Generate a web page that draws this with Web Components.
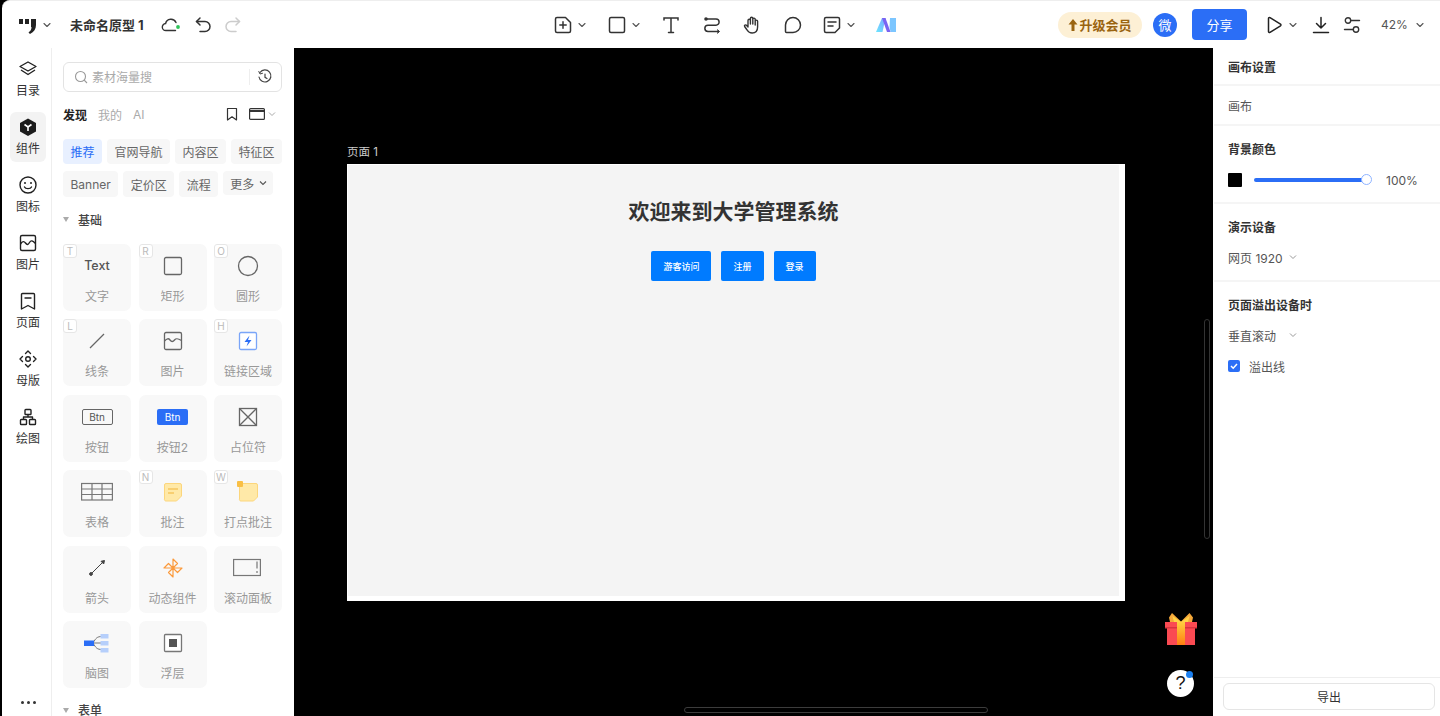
<!DOCTYPE html>
<html lang="zh">
<head>
<meta charset="utf-8">
<title>未命名原型 1</title>
<style>
  html, body { margin: 0; height: 100%; background: #000; overflow: hidden; }
  body { font-family: Inter, "Noto Sans CJK SC", sans-serif; }
  svg { display: block; }
</style>
</head>
<body>
<proto-app>
  <top-bar slot="top">
    <tool-btn style="margin-left:16px"><svg width="20" height="20" viewBox="0 0 20 20" fill="#222"><rect x="1" y="4" width="4" height="5"/><rect x="7" y="4" width="4" height="5"/><path d="M13 4h5v6c0 4-2 7-6 9l-1.500-1.500c2-1.500 3-3 3-5.500h-.5z"/></svg></tool-btn>
    <chev-down style="margin-left:4px"></chev-down>
    <span style="margin-left:18px;width:74px;font-size:13px;font-weight:700;color:#333;white-space:nowrap">未命名原型 1</span>
    <tool-btn style="margin-left:17px"><svg width="20" height="20" viewBox="0 0 20 20" fill="none" stroke="#333" stroke-width="1.400" stroke-linecap="round"><path d="M14.500 15.500H5a3.500 3.500 0 0 1-.4-7A5.500 5.500 0 0 1 15 7.500"/><circle cx="17" cy="12" r="1.900" fill="#2ec45a" stroke="none"/></svg></tool-btn>
    <tool-btn style="margin-left:12px"><svg width="20" height="20" viewBox="0 0 20 20" fill="none" stroke="#333" stroke-width="1.500" stroke-linecap="round" stroke-linejoin="round"><path d="M7 3 3.500 6.500 7 10"/><path d="M3.500 6.500h8.500a5 5 0 0 1 0 10H7"/></svg></tool-btn>
    <tool-btn style="margin-left:10px"><svg width="20" height="20" viewBox="0 0 20 20" fill="none" stroke="#ccc" stroke-width="1.500" stroke-linecap="round" stroke-linejoin="round"><path d="M13 3l3.500 3.500L13 10"/><path d="M16.500 6.500H8a5 5 0 0 0 0 10h5"/></svg></tool-btn>

    <tool-btn style="margin-left:310px"><svg width="20" height="20" viewBox="0 0 20 20" fill="none" stroke="#333" stroke-width="1.500" stroke-linecap="round" stroke-linejoin="round"><path d="M4 2.500h8.500l5 5V16a1.500 1.500 0 0 1-1.500 1.500H4A1.500 1.500 0 0 1 2.500 16V4A1.500 1.500 0 0 1 4 2.500z"/><path d="M10 6.800v6.400M6.800 10h6.400"/></svg></tool-btn>
    <chev-down style="margin-left:4px"></chev-down>
    <tool-btn style="margin-left:20px"><svg width="20" height="20" viewBox="0 0 20 20" fill="none" stroke="#333" stroke-width="1.500"><rect x="2.500" y="2.500" width="15" height="15" rx="1.500"/></svg></tool-btn>
    <chev-down style="margin-left:4px"></chev-down>
    <tool-btn style="margin-left:20px"><svg width="20" height="20" viewBox="0 0 20 20" fill="none" stroke="#333" stroke-width="1.500" stroke-linecap="round"><path d="M3 5V3h14v2M10 3v14.500M7.500 17.500h5"/></svg></tool-btn>
    <tool-btn style="margin-left:21px"><svg width="20" height="20" viewBox="0 0 20 20" fill="none" stroke="#333" stroke-width="1.500" stroke-linecap="round"><path d="M4 4h10a3 3 0 0 1 0 6.200H6a3 3 0 0 0 0 6.300h10"/><circle cx="4" cy="4" r="1.800" fill="#333" stroke="none"/><path d="M15.500 14.800l2 1.700-2 1.700" fill="#333" stroke-width="1"/></svg></tool-btn>
    <tool-btn style="margin-left:20px"><svg width="20" height="20" viewBox="0 0 20 20" fill="none" stroke="#333" stroke-width="1.400" stroke-linecap="round" stroke-linejoin="round"><path d="M6 12V5.500a1.200 1.200 0 0 1 2.400 0V9M8.400 9V3.500a1.200 1.200 0 0 1 2.400 0V9M10.800 9V4.300a1.200 1.200 0 0 1 2.400 0V10M13.200 10V6.300a1.200 1.200 0 0 1 2.400 0V12c0 3.500-2 6-5.500 6-2.500 0-3.800-1-5-3L2.600 11.500c-.6-1 .9-2.200 1.900-1.200L6 12"/></svg></tool-btn>
    <tool-btn style="margin-left:21px"><svg width="20" height="20" viewBox="0 0 20 20" fill="none" stroke="#333" stroke-width="1.500" stroke-linejoin="round"><path d="M10 2.500a7.500 7.500 0 1 1 0 15H3.500a1 1 0 0 1-1-1V10A7.500 7.500 0 0 1 10 2.500z"/></svg></tool-btn>
    <tool-btn style="margin-left:19px"><svg width="20" height="20" viewBox="0 0 20 20" fill="none" stroke="#333" stroke-width="1.500" stroke-linecap="round" stroke-linejoin="round"><path d="M4 2.500h12A1.500 1.500 0 0 1 17.500 4v9L13 17.500H4A1.500 1.500 0 0 1 2.500 16V4A1.500 1.500 0 0 1 4 2.500z"/><path d="M6 7h8M6 11h5"/></svg></tool-btn>
    <chev-down style="margin-left:4px"></chev-down>
    <tool-btn style="margin-left:20px"><svg width="20" height="20" viewBox="0 0 20 20"><defs><linearGradient id="mg" x1="0" y1="1" x2="1" y2="0"><stop offset="0" stop-color="#6be6ff"/><stop offset="1" stop-color="#7fa6ff"/></linearGradient></defs><path d="M0 17 6 3h3.500l-3 14z" fill="url(#mg)"/><path d="M14 3H20v14h-5.500l-1-5z" fill="#7cc6ff"/><path d="M6 3h3.500l5 14H11z" fill="#7a63f2"/></svg></tool-btn>

    <span style="margin-left:162px;width:84px;height:26px;border-radius:13px;background:#fdf0d5;color:#9a6410;font-size:13px;font-weight:700;display:flex;align-items:center;justify-content:center;gap:1px"><svg width="10" height="14" viewBox="0 0 10 14" fill="#9a6410"><path d="M5 1 9.500 6.500H6.500V13h-3V6.500H.5z"/></svg>升级会员</span>
    <span style="margin-left:11px;width:24px;height:24px;border-radius:50%;background:#2b6ef6;color:#fff;font-size:13px;display:flex;align-items:center;justify-content:center">微</span>
    <span style="margin-left:15px;width:55px;height:31px;border-radius:4px;background:#2b6ef6;color:#fff;font-size:13px;display:flex;align-items:center;justify-content:center">分享</span>
    <tool-btn style="margin-left:17px"><svg width="20" height="20" viewBox="0 0 20 20" fill="none" stroke="#222" stroke-width="1.500" stroke-linejoin="round"><path d="M4.500 3.500c0-.8.800-1.200 1.500-.8l10.500 6.500c.6.400.6 1.200 0 1.600L6 17.300c-.7.400-1.500 0-1.500-.8z"/></svg></tool-btn>
    <chev-down style="margin-left:4px"></chev-down>
    <tool-btn style="margin-left:13px"><svg width="20" height="20" viewBox="0 0 20 20" fill="none" stroke="#222" stroke-width="1.500" stroke-linecap="round" stroke-linejoin="round"><path d="M10 2.500V13M5.500 8.500 10 13l4.500-4.500M2.500 17.500h15"/></svg></tool-btn>
    <tool-btn style="margin-left:11px"><svg width="20" height="20" viewBox="0 0 20 20" fill="none" stroke="#333" stroke-width="1.400" stroke-linecap="round"><circle cx="6" cy="5.500" r="2.700"/><path d="M9 5.500h8.500M2.500 14.500h8.500"/><circle cx="14" cy="14.500" r="2.700"/></svg></tool-btn>
    <span style="margin-left:19px;width:27px;font-size:12px;color:#555;white-space:nowrap">42%</span>
    <chev-down style="margin-left:7px"></chev-down>
  </top-bar>

  <side-rail slot="rail">
    <rail-item label="目录"><svg width="20" height="20" viewBox="0 0 20 20" fill="none" stroke="#222" stroke-width="1.400" stroke-linejoin="round"><path d="M10 3l8 4.500-8 4.500-8-4.500z"/><path d="M3 11l7 4.500 7-4.500"/></svg></rail-item>
    <rail-item label="组件" active><svg width="20" height="20" viewBox="0 0 20 20"><path d="M10 1.500 18 6v8.500L10 19l-8-4.500V6z" fill="#1c1c1c"/><path d="M6.500 7.500 10 10l3.500-2.500M10 10v4" fill="none" stroke="#fff" stroke-width="1.600"/></svg></rail-item>
    <rail-item label="图标"><svg width="20" height="20" viewBox="0 0 20 20" fill="none" stroke="#222" stroke-width="1.400" stroke-linecap="round"><circle cx="10" cy="10" r="8"/><circle cx="7" cy="8" r="1" fill="#222" stroke="none"/><circle cx="13" cy="8" r="1" fill="#222" stroke="none"/><path d="M6.500 12c1 2.200 6 2.200 7 0"/></svg></rail-item>
    <rail-item label="图片"><svg width="20" height="20" viewBox="0 0 20 20" fill="none" stroke="#222" stroke-width="1.400" stroke-linejoin="round"><rect x="2.500" y="2.500" width="15" height="15" rx="1.500"/><path d="M2.500 11c2-3 3.500-3 5-1s2.500 2 4-.5 3-2 6 1"/></svg></rail-item>
    <rail-item label="页面"><svg width="20" height="20" viewBox="0 0 20 20" fill="none" stroke="#222" stroke-width="1.400" stroke-linecap="round" stroke-linejoin="round"><path d="M3.500 18V3.500a1 1 0 0 1 1-1h11a1 1 0 0 1 1 1V18L10 14.500z"/><path d="M7 7h6"/></svg></rail-item>
    <rail-item label="母版"><svg width="20" height="20" viewBox="0 0 20 20" fill="none" stroke="#222" stroke-width="1.400" stroke-linecap="round" stroke-linejoin="round"><circle cx="10" cy="10" r="2.300"/><path d="M7.500 4.500 10 2l2.500 2.500M7.500 15.500 10 18l2.500-2.500M4.500 7.500 2 10l2.500 2.500M15.500 7.500 18 10l-2.500 2.500"/></svg></rail-item>
    <rail-item label="绘图"><svg width="20" height="20" viewBox="0 0 20 20" fill="none" stroke="#222" stroke-width="1.400" stroke-linejoin="round"><rect x="7" y="2.500" width="6" height="5" rx=".8"/><rect x="2.500" y="12.500" width="6" height="5" rx=".8"/><rect x="11.500" y="12.500" width="6" height="5" rx=".8"/><path d="M10 7.500v2.500M5.500 12.500V10h9v2.500"/></svg></rail-item>
  </side-rail>

  <asset-panel slot="panel">
    <asset-card label="文字" key="T"><span style="font-size:12.500px;font-weight:500;color:#555;line-height:24px">Text</span></asset-card>
    <asset-card label="矩形" key="R"><svg width="24" height="24" viewBox="0 0 24 24" fill="none" stroke="#666" stroke-width="1.300"><rect x="3.500" y="3.500" width="17" height="17" rx="1.500"/></svg></asset-card>
    <asset-card label="圆形" key="O"><svg width="24" height="24" viewBox="0 0 24 24" fill="none" stroke="#666" stroke-width="1.300"><circle cx="12" cy="12" r="9.500"/></svg></asset-card>
    <asset-card label="线条" key="L"><svg width="24" height="24" viewBox="0 0 24 24" fill="none" stroke="#666" stroke-width="1.200"><path d="M5 19 19 5"/></svg></asset-card>
    <asset-card label="图片"><svg width="24" height="24" viewBox="0 0 24 24" fill="none" stroke="#666" stroke-width="1.300" stroke-linejoin="round"><rect x="3.500" y="3.500" width="17" height="17" rx="1.500"/><path d="M3.500 12c2.500-2.500 4-3 5.500-1s3 2 4.500 0 3-2 7 .5"/></svg></asset-card>
    <asset-card label="链接区域" key="H"><svg width="24" height="24" viewBox="0 0 24 24"><rect x="3.500" y="3.500" width="17" height="17" rx="1.500" fill="#fff" stroke="#7aa5f8" stroke-width="1.300"/><path d="M13.500 6.500 8.500 13H12l-1.500 4.500 5-6.500H12z" fill="#2b6ef6"/></svg></asset-card>
    <asset-card label="按钮"><span style="width:31px;height:16px;border:1.300px solid #666;border-radius:2px;font-size:10px;color:#555;display:flex;align-items:center;justify-content:center;margin-top:4px;box-sizing:border-box">Btn</span></asset-card>
    <asset-card label="按钮2"><span style="width:31px;height:16px;background:#2b6ef6;border-radius:2px;font-size:10px;color:#fff;display:flex;align-items:center;justify-content:center;margin-top:4px">Btn</span></asset-card>
    <asset-card label="占位符"><svg width="24" height="24" viewBox="0 0 24 24" fill="none" stroke="#666" stroke-width="1.300"><rect x="3.500" y="3.500" width="17" height="17"/><path d="M3.500 3.500l17 17M20.500 3.500l-17 17"/></svg></asset-card>
    <asset-card label="表格"><svg width="32" height="24" viewBox="0 0 32 24" fill="none" stroke="#777" stroke-width="1.200"><rect x=".6" y="3.500" width="30.800" height="16.500"/><path d="M.6 9h30.800M.6 14.500h30.800M11 3.500V20M21 3.500V20"/></svg></asset-card>
    <asset-card label="批注" key="N"><svg width="24" height="24" viewBox="0 0 24 24"><path d="M5 3.500h14a1.500 1.500 0 0 1 1.500 1.500v11l-5 5H5A1.500 1.500 0 0 1 3.500 19V5A1.500 1.500 0 0 1 5 3.500z" fill="#ffe9a8" stroke="#fcd67c"/><path d="M7 9h10M7 13h6" stroke="#f6c65f" stroke-width="1.300"/></svg></asset-card>
    <asset-card label="打点批注" key="W"><svg width="24" height="24" viewBox="0 0 24 24"><path d="M5 3.500h15a1.500 1.500 0 0 1 1.500 1.500v12l-4 4H5A1.500 1.500 0 0 1 3.500 19V5A1.500 1.500 0 0 1 5 3.500z" fill="#ffe9a8" stroke="#fcd67c"/><rect x="1" y="1" width="6" height="6" rx="1" fill="#f9bf45"/></svg></asset-card>
    <asset-card label="箭头"><svg width="24" height="24" viewBox="0 0 24 24" fill="#444" stroke="#444" stroke-width="1"><path d="M6 18 18 6"/><circle cx="6" cy="18" r="1.400"/><path d="M19.500 4.500l-.8 3.500-2.700-2.700z"/></svg></asset-card>
    <asset-card label="动态组件"><svg width="24" height="24" viewBox="0 0 24 24" fill="none" stroke="#fb9a3c" stroke-width="1.200" stroke-linejoin="round"><path d="M12 12V3L16.500 7.500zM12 12h9l-4.500 4.500zM12 12v9l-4.500-4.500zM12 12H3l4.500-4.500z"/></svg></asset-card>
    <asset-card label="滚动面板"><svg width="30" height="24" viewBox="0 0 30 24" fill="none" stroke="#777" stroke-width="1.200"><rect x=".6" y="3.500" width="26.800" height="16"/><path d="M24 5.500v7M24 15v2" stroke-width="1.200"/></svg></asset-card>
    <asset-card label="脑图"><svg width="26" height="24" viewBox="0 0 26 24" fill="none"><path d="M9 12c3-5 4-6.500 9-6.500M9 12h9M9 12c3 5 4 6.500 9 6.500" stroke="#777" stroke-width="1"/><rect x="0" y="9.500" width="10" height="5.500" fill="#2b6ef6"/><rect x="16.500" y="3" width="8" height="4.500" fill="#b6cffb"/><rect x="16.500" y="10" width="8" height="4.500" fill="#b6cffb"/><rect x="16.500" y="17" width="8" height="4.500" fill="#b6cffb"/></svg></asset-card>
    <asset-card label="浮层"><svg width="24" height="24" viewBox="0 0 24 24"><rect x="3.500" y="3.500" width="17" height="17" rx="1" fill="#fff" stroke="#777" stroke-width="1.300"/><rect x="8" y="8" width="8" height="8" fill="#555"/></svg></asset-card>
  </asset-panel>

  <canvas-stage slot="stage">
    <art-board>
      <h-title>欢迎来到大学管理系统</h-title>
      <blue-btn>游客访问</blue-btn>
      <blue-btn>注册</blue-btn>
      <blue-btn>登录</blue-btn>
    </art-board>
  </canvas-stage>

  <props-panel slot="props"></props-panel>
</proto-app>

<script>
// small helper so each element only has to say what its shadow holds
function shadow(el, html) {
  el.attachShadow({ mode: 'open' }).innerHTML = html;
}

class ProtoApp extends HTMLElement {
  constructor() {
    super();
    shadow(this, `
      <style>
        :host { display: flex; flex-direction: column; width: 1438px; height: 716px; margin-left: 2px; background: #fff; border-top: 1px solid #eee; box-sizing: border-box; border-top-left-radius: 8px; overflow: hidden; color: #333; }
        .main { flex: 1; display: flex; min-height: 0; }
      </style>
      <slot name="top"></slot>
      <div class="main">
        <slot name="rail"></slot>
        <slot name="panel"></slot>
        <slot name="stage"></slot>
        <slot name="props"></slot>
      </div>`);
  }
}

class TopBar extends HTMLElement {
  constructor() {
    super();
    shadow(this, `
      <style>
        :host { display: flex; align-items: center; height: 47px; flex: none; }
      </style>
      <slot></slot>`);
  }
}

class ToolBtn extends HTMLElement {
  constructor() {
    super();
    shadow(this, `
      <style>:host { display: block; width: 20px; height: 20px; flex: none; }</style>
      <slot></slot>`);
  }
}

class ChevDown extends HTMLElement {
  constructor() {
    super();
    shadow(this, `
      <style>:host { display: block; width: 10px; height: 10px; flex: none; } svg { display: block; }</style>
      <svg width="10" height="10" viewBox="0 0 10 10" fill="none" stroke="#555" stroke-width="1.100" stroke-linecap="round" stroke-linejoin="round"><path d="M2 3.500 5 6.500 8 3.500"/></svg>`);
  }
}

class SideRail extends HTMLElement {
  constructor() {
    super();
    shadow(this, `
      <style>
        :host { display: flex; flex-direction: column; align-items: center; width: 50px; flex: none; padding: 6px 0 0 3px; gap: 8px; box-sizing: border-box; border-right: 1px solid #eee; }
        .more { margin-top: auto; margin-bottom: 12px; display: flex; gap: 3px; }
        .more i { width: 3px; height: 3px; border-radius: 50%; background: #333; }
      </style>
      <slot></slot>
      <div class="more"><i></i><i></i><i></i></div>`);
  }
}

class RailItem extends HTMLElement {
  constructor() {
    super();
    const on = this.hasAttribute('active');
    shadow(this, `
      <style>
        :host { display: flex; flex-direction: column; align-items: center; width: 36px; height: 50px; padding-top: 5px; box-sizing: border-box; border-radius: 6px; background: ${on ? '#f3f3f3' : 'transparent'}; }
        span { font-size: 12px; line-height: 16px; margin-top: 4px; color: #333; }
      </style>
      <slot></slot>
      <span>${this.getAttribute('label')}</span>`);
  }
}

class AssetPanel extends HTMLElement {
  constructor() {
    super();
    const chips = (list) => list.map((c) => `<span class="chip ${c === '推荐' ? 'on' : ''}">${c}</span>`).join('');
    shadow(this, `
      <style>
        :host { display: block; width: 242px; flex: none; box-sizing: border-box; padding: 14px 12px 0 11px; overflow: hidden; }
        .search { display: flex; align-items: center; height: 30px; box-sizing: border-box; border: 1px solid #e3e3e3; border-radius: 6px; padding: 0 8px 2px 10px; font-size: 12px; color: #aaa; }
        .search svg { margin-top: 2px; }
        .search svg:first-child { margin-right: 4px; }
        .search .sep { margin-left: auto; width: 1px; height: 16px; background: #eee; margin-right: 7px; margin-top: 2px; }
        .tabs { display: flex; align-items: center; height: 20px; margin-top: 12px; font-size: 12px; color: #aaa; gap: 11px; }
        .tabs b { color: #222; }
        .tabs svg { display: block; }
        .tabs .r { margin-left: auto; display: flex; align-items: center; }
        .chips { display: flex; gap: 5px; height: 25px; font-size: 12px; color: #666; }
        .chips.one { margin-top: 15px; }
        .chips.two { margin-top: 7px; height: 26px; }
        .chip { background: #f7f7f7; border-radius: 4px; padding: 0 7.500px; display: flex; align-items: center; white-space: nowrap; }
        .chip.on { background: #e8f0ff; color: #2b6ef6; }
        .chip.more { height: 24px; gap: 4px; padding: 0 5px 0 7px; }
        .head { display: flex; align-items: center; height: 20px; font-size: 12px; font-weight: 500; color: #444; }
        .head i { width: 0; height: 0; border: 3.500px solid transparent; border-top: 5px solid #aaa; border-bottom: 0; margin: 1px 9px 0 0; }
        .head.basic { margin-top: 12px; }
        .grid { display: grid; grid-template-columns: repeat(3, 68px); grid-auto-rows: 67px; column-gap: 7.500px; row-gap: 8.400px; margin-top: 15px; }
        .head.form { margin-top: 12px; }
      </style>
      <div class="search">
        <svg width="14" height="14" viewBox="0 0 14 14" fill="none" stroke="#999" stroke-width="1.100"><circle cx="6.500" cy="6.500" r="5"/><path d="M10.200 10.200 13 13"/></svg>
        <span>素材海量搜</span><span class="sep"></span>
        <svg width="16" height="16" viewBox="0 0 16 16" fill="none" stroke="#444" stroke-width="1.200" stroke-linecap="round"><path d="M3 3.500A6 6 0 1 1 2 8"/><path d="M1.800 2.500 3 5l2.500-.7" stroke-width="1"/><path d="M8 5v3.300l2 1.200"/></svg>
      </div>
      <div class="tabs">
        <b>发现</b><span>我的</span><span>AI</span>
        <span class="r">
          <svg width="12" height="14" viewBox="0 0 12 14" fill="none" stroke="#333" stroke-width="1.200" stroke-linejoin="round"><path d="M1.500 13V1.500h9V13L6 9.800z"/></svg>
          <svg style="margin-left:11px" width="16" height="12" viewBox="0 0 16 12" fill="none" stroke="#333" stroke-width="1.200"><rect x=".6" y=".6" width="14.800" height="10.800" rx="1"/><path d="M.6 3h14.800" stroke-width="1.800"/></svg>
          <svg style="margin-left:2px;margin-right:5px" width="10" height="10" viewBox="0 0 10 10" fill="none" stroke="#aaa" stroke-width="1"><path d="M2 3.500 5 6.500 8 3.500"/></svg>
        </span>
      </div>
      <div class="chips one">${chips(['推荐', '官网导航', '内容区', '特征区'])}</div>
      <div class="chips two">${chips(['Banner', '定价区', '流程'])}<span class="chip more">更多<svg width="10" height="10" viewBox="0 0 10 10" fill="none" stroke="#555" stroke-width="1.100"><path d="M2 3.500 5 6.500 8 3.500"/></svg></span></div>
      <div class="head basic"><i></i>基础</div>
      <div class="grid"><slot></slot></div>
      <div class="head form"><i></i>表单</div>`);
  }
}

class AssetCard extends HTMLElement {
  constructor() {
    super();
    const key = this.getAttribute('key');
    shadow(this, `
      <style>
        :host { display: flex; flex-direction: column; align-items: center; position: relative; box-sizing: border-box; padding-top: 10px; background: #f8f8f8; border-radius: 7px; }
        .icon { height: 24px; display: flex; align-items: flex-start; justify-content: center; }
        .name { margin-top: 11px; font-size: 12px; line-height: 16px; color: #999; white-space: nowrap; }
        .key { position: absolute; left: 0; top: 0; width: 12px; height: 12px; border: 1px solid #e6e6e6; border-radius: 3px; background: #fff; font-size: 10px; line-height: 12px; text-align: center; color: #bbb; }
      </style>
      ${key ? `<span class="key">${key}</span>` : ''}
      <div class="icon"><slot></slot></div>
      <div class="name">${this.getAttribute('label')}</div>`);
  }
}

class CanvasStage extends HTMLElement {
  constructor() {
    super();
    shadow(this, `
      <style>
        :host { display: block; position: relative; width: 919px; flex: none; background: #000; overflow: hidden; }
        .page-name { position: absolute; left: 53px; top: 96px; font-size: 11.500px; line-height: 16px; color: #ccc; }
        .board { position: absolute; left: 53px; top: 116px; }
        .vbar { position: absolute; left: 910px; top: 271px; width: 6px; height: 220px; box-sizing: border-box; border: 1px solid #333; border-radius: 3px; }
        .hbar { position: absolute; left: 390px; top: 659px; width: 304px; height: 6px; box-sizing: border-box; border: 1px solid #3c3c3c; border-radius: 3px; }
        .gift { position: absolute; left: 870px; top: 564px; }
        .help { position: absolute; left: 873px; top: 622px; width: 27px; height: 27px; border-radius: 50%; background: #fff; color: #111; font: 400 18px/27px "Liberation Sans", sans-serif; text-align: center; }
        .help i { position: absolute; left: 19px; top: 1px; width: 7px; height: 7px; border-radius: 50%; background: #1a7ff0; }
      </style>
      <div class="page-name">页面 1</div>
      <div class="board"><slot></slot></div>
      <div class="vbar"></div>
      <div class="hbar"></div>
      <svg class="gift" width="34" height="34" viewBox="0 0 34 34">
        <defs><linearGradient id="rb" x1="0" y1="0" x2="0" y2="1"><stop offset="0" stop-color="#ffcf3f"/><stop offset="1" stop-color="#ff7d12"/></linearGradient></defs>
        <path d="M8 1 17 9.500 25.500 1 29 5.500 28 10H6L5 5.500z" fill="#f5a83a"/>
        <path d="M10 10 8.500 4 17 10l8.500-6L24 10z" fill="#ffd447"/>
        <rect x="3" y="14" width="28" height="19" fill="#fa4a52"/>
        <rect x="1" y="10" width="32" height="5" fill="#fa4a52"/>
        <path d="M1 15h32v1.500H1z" fill="#d8343f"/>
        <rect x="13" y="10" width="8" height="23" fill="url(#rb)"/>
      </svg>
      <div class="help">?<i></i></div>`);
  }
}

class ArtBoard extends HTMLElement {
  constructor() {
    super();
    shadow(this, `
      <style>
        :host { display: block; width: 778px; height: 437px; box-sizing: border-box; border: 1px solid #fff; border-width: 1px 6px 5px 1px; background: #f4f4f4; }
        .wrap { display: flex; flex-direction: column; align-items: center; padding-top: 31px; }
        .btns { display: flex; gap: 10px; margin-top: 23px; }
      </style>
      <div class="wrap">
        <slot name="title"></slot>
        <div class="btns"><slot></slot></div>
      </div>`);
    this.querySelector('h-title').slot = 'title';
  }
}

class HTitle extends HTMLElement {
  constructor() {
    super();
    shadow(this, `
      <style>:host { display: block; font-size: 21px; font-weight: 700; line-height: 32px; color: #333; }</style>
      <slot></slot>`);
  }
}

class BlueBtn extends HTMLElement {
  constructor() {
    super();
    shadow(this, `
      <style>:host { display: flex; align-items: center; height: 30px; padding: 0 12px; background: #007bff; border-radius: 2px; color: #fff; font-size: 9px; font-weight: 500; }</style>
      <slot></slot>`);
  }
}

class PropsPanel extends HTMLElement {
  constructor() {
    super();
    const chev = '<svg style="display:block" width="10" height="10" viewBox="0 0 10 10" fill="none" stroke="#999" stroke-width="1"><path d="M2 3.500 5 6.500 8 3.500"/></svg>';
    shadow(this, `
      <style>
        :host { display: flex; flex-direction: column; flex: 1; min-width: 0; font-size: 12px; color: #555; padding-left: 1px; box-sizing: border-box; }
        .sec { padding-left: 14px; border-bottom: 2px solid #f5f5f5; box-sizing: border-box; }
        .sec b { display: block; font-weight: 600; color: #333; line-height: 16px; }
        .row { display: flex; align-items: center; }
        .track { width: 112px; height: 4px; margin-left: 12px; border-radius: 2px; background: #2b6ef6; position: relative; }
        .thumb { position: absolute; right: -6px; top: -4px; width: 9px; height: 9px; border: 1.500px solid #8fb4ff; border-radius: 50%; background: #fff; }
        .swatch { width: 14px; height: 14px; background: #000; border-radius: 1px; }
        .check { width: 12px; height: 12px; border-radius: 2px; background: #2b6ef6; display: flex; align-items: center; justify-content: center; margin-right: 9px; }
        .foot { margin-top: auto; height: 39px; border-top: 1px solid #eee; padding: 5px 5px 0 9px; box-sizing: border-box; }
        .foot div { height: 27px; border: 1px solid #e5e5e5; border-radius: 6px; box-sizing: border-box; display: flex; align-items: center; justify-content: center; color: #333; }
      </style>
      <div class="sec" style="height:38px;padding-top:12px"><b>画布设置</b></div>
      <div class="sec row" style="height:40px;padding-top:1px">画布</div>
      <div class="sec" style="height:78px;padding-top:16px">
        <b>背景颜色</b>
        <div class="row" style="margin-top:15px;height:14px"><span class="swatch"></span><span class="track"><span class="thumb"></span></span><span style="margin-left:20px">100%</span></div>
      </div>
      <div class="sec" style="height:78px;padding-top:16px">
        <b>演示设备</b>
        <div class="row" style="margin-top:13px;height:16px">网页 1920<span style="margin-left:5px">${chev}</span></div>
      </div>
      <div style="padding:16px 0 0 14px;box-sizing:border-box">
        <b style="display:block;font-weight:600;color:#333;line-height:16px">页面溢出设备时</b>
        <div class="row" style="margin-top:13px;height:16px">垂直滚动<span style="margin-left:12px">${chev}</span></div>
        <div class="row" style="margin-top:15px;height:16px"><span class="check"><svg style="display:block" width="10" height="10" viewBox="0 0 10 10" fill="none" stroke="#fff" stroke-width="1.500"><path d="M2 5l2.200 2.200L8 3"/></svg></span>溢出线</div>
      </div>
      <div class="foot"><div>导出</div></div>`);
  }
}

customElements.define('proto-app', ProtoApp);
customElements.define('top-bar', TopBar);
customElements.define('tool-btn', ToolBtn);
customElements.define('chev-down', ChevDown);
customElements.define('side-rail', SideRail);
customElements.define('rail-item', RailItem);
customElements.define('asset-panel', AssetPanel);
customElements.define('asset-card', AssetCard);
customElements.define('canvas-stage', CanvasStage);
customElements.define('art-board', ArtBoard);
customElements.define('h-title', HTitle);
customElements.define('blue-btn', BlueBtn);
customElements.define('props-panel', PropsPanel);
</script>
</body>
</html>
